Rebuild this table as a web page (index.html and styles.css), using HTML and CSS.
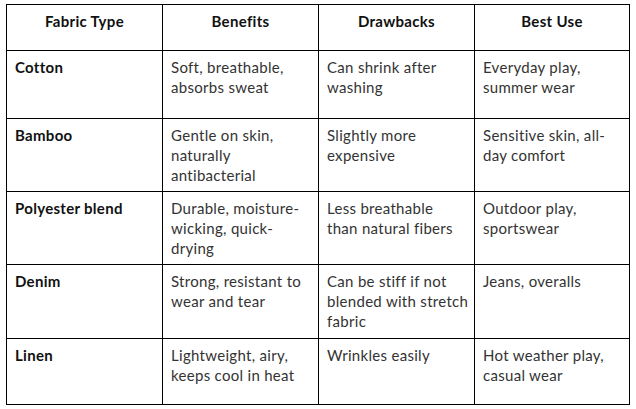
FILE: index.html
```html
<!DOCTYPE html>
<html>
<head>
<meta charset="utf-8">
<link rel="stylesheet" href="styles.css">
</head>
<body>
<table class="fabric">
  <colgroup>
    <col class="c1"><col class="c2"><col class="c3"><col class="c4">
  </colgroup>
  <thead>
    <tr class="r-head">
      <th>Fabric Type</th>
      <th>Benefits</th>
      <th>Drawbacks</th>
      <th>Best Use</th>
    </tr>
  </thead>
  <tbody>
    <tr class="r-cotton">
      <td class="name">Cotton</td>
      <td>Soft, breathable, absorbs sweat</td>
      <td>Can shrink after washing</td>
      <td>Everyday play, summer wear</td>
    </tr>
    <tr class="r-bamboo">
      <td class="name">Bamboo</td>
      <td>Gentle on skin, naturally antibacterial</td>
      <td>Slightly more expensive</td>
      <td>Sensitive skin, all-day comfort</td>
    </tr>
    <tr class="r-poly">
      <td class="name">Polyester blend</td>
      <td>Durable, moisture-wicking, quick-drying</td>
      <td>Less breathable than natural fibers</td>
      <td>Outdoor play, sportswear</td>
    </tr>
    <tr class="r-denim">
      <td class="name">Denim</td>
      <td>Strong, resistant to wear and tear</td>
      <td>Can be stiff if not <span class="keep">blended with stretch</span> fabric</td>
      <td>Jeans, overalls</td>
    </tr>
    <tr class="r-linen">
      <td class="name">Linen</td>
      <td>Lightweight, airy, keeps cool in heat</td>
      <td>Wrinkles easily</td>
      <td>Hot weather play, casual wear</td>
    </tr>
  </tbody>
</table>
</body>
</html>
```
FILE: styles.css
```css
html, body {
  margin: 0;
  padding: 0;
  background: #ffffff;
}
body {
  padding: 4px 0 0 6px;
  font-family: "Lato", "Open Sans", "Liberation Sans", sans-serif;
}
.fabric {
  border-collapse: collapse;
  table-layout: fixed;
  width: 623px;
  font-size: 15px;
  line-height: 20px;
  letter-spacing: 0.3px;
  color: #333333;
}
.c1, .c2, .c3 { width: 156px; }
.c4 { width: 155px; }
.fabric th, .fabric td {
  border: 1px solid #000000;
  vertical-align: top;
  text-align: left;
  padding: 6px 8px 0 8px;
}
.fabric th {
  text-align: center;
  font-weight: 700;
  color: #111111;
}
.fabric td.name {
  font-weight: 700;
  color: #111111;
}
.keep {
  white-space: nowrap;
}
.r-head { height: 46px; }
.r-cotton { height: 68px; }
.r-bamboo { height: 73px; }
.r-poly { height: 73px; }
.r-denim { height: 74px; }
.r-linen { height: 66px; }
```
